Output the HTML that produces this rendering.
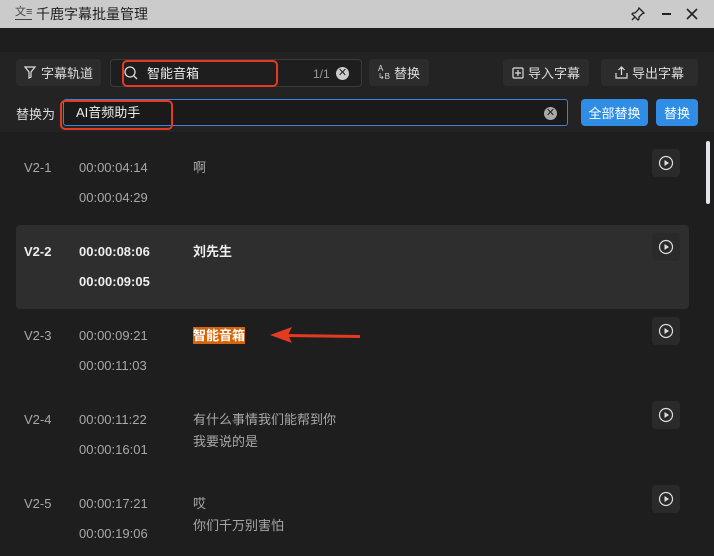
<!DOCTYPE html><html><head><meta charset="utf-8"><style>
*{margin:0;padding:0;box-sizing:border-box}
body{width:714px;height:556px;overflow:hidden;background:#1e1e1e;font-family:"Liberation Sans","Noto Sans CJK SC",sans-serif;font-size:13px;color:#ddd;position:relative}
.a{position:absolute}
.btn{position:absolute;background:#2c2c2c;border-radius:4px;color:#ddd;font-size:13px;display:flex;align-items:center;justify-content:center;gap:4px;height:27px}
.t{position:absolute;line-height:16px;font-size:13px;color:#a8a8a8}
.play{position:absolute;left:652px;width:28px;height:28px;background:#2a2a2a;border-radius:4px;display:flex;align-items:center;justify-content:center}
</style></head><body>
<div class="a" style="left:0;top:0;width:714px;height:28px;background:#cbcbcb"></div>
<div class="a" style="left:15px;top:5px;font-size:11px;color:#444;line-height:14px;border-bottom:1px solid #444">文≡</div>
<div class="a" style="left:36px;top:5px;font-size:14px;color:#222;line-height:18px">千鹿字幕批量管理</div>
<svg class="a" style="left:630px;top:6px" width="16" height="16" viewBox="0 0 16 16" fill="none" stroke="#222" stroke-width="1.3"><path d="M9 2l5 5-2 1-3 3 0 2-1 1-6-6 1-1h2l3-3z M5 11l-3 3"/></svg>
<div class="a" style="left:662px;top:13px;width:9px;height:2px;background:#222"></div>
<svg class="a" style="left:686px;top:8px" width="12" height="12" viewBox="0 0 12 12" stroke="#222" stroke-width="1.6"><path d="M1 1l10 10M11 1L1 11"/></svg>

<div class="a" style="left:0;top:52px;width:714px;height:80px;background:#232323"></div>
<div class="btn" style="left:16px;top:59px;width:85px">
<svg width="13" height="13" viewBox="0 0 13 13" fill="none" stroke="#ddd" stroke-width="1.2"><path d="M1 1h10L7 6v5L5 12V6z"/></svg>字幕轨道</div>
<div class="a" style="left:110px;top:59px;width:252px;height:28px;border:1px solid #3a3a3a;border-radius:4px;background:#1e1e1e"></div>
<div class="a" style="left:122px;top:60px;width:156px;height:27px;border:2px solid #e53a22;border-radius:5px"></div>
<svg class="a" style="left:124px;top:66px" width="14" height="14" viewBox="0 0 14 14" fill="none" stroke="#ddd" stroke-width="1.3"><circle cx="6" cy="6" r="5"/><path d="M10 10l3 3"/></svg>
<div class="a" style="left:147px;top:66px;font-size:13px;color:#eee;line-height:16px">智能音箱</div>
<div class="a" style="left:313px;top:67px;font-size:12px;color:#999">1/1</div>
<div class="a" style="left:336px;top:67px;width:13px;height:13px;border-radius:50%;background:#ccc;color:#222;font-size:11px;line-height:13px;text-align:center">✕</div>
<div class="btn" style="left:369px;top:59px;width:60px"><span style="font-size:8px;line-height:8px">A<br>↳B</span>替换</div>
<div class="btn" style="left:503px;top:59px;width:86px"><svg width="12" height="12" viewBox="0 0 12 12" fill="none" stroke="#ddd" stroke-width="1.2"><rect x="1" y="1" width="10" height="10" rx="1"/><path d="M6 3v6M3 6h6"/></svg>导入字幕</div>
<div class="btn" style="left:601px;top:59px;width:97px"><svg width="13" height="13" viewBox="0 0 13 13" fill="none" stroke="#ddd" stroke-width="1.2"><path d="M6.5 9V1M3.5 4l3-3 3 3M1 7v5h11V7"/></svg>导出字幕</div>

<div class="a" style="left:16px;top:104px;font-size:13px;color:#ddd">替换为</div>
<div class="a" style="left:63px;top:99px;width:505px;height:27px;border:1px solid #3d82d6;border-radius:3px;background:#1a1a1a"></div>
<div class="a" style="left:60px;top:100px;width:113px;height:30px;border:2px solid #e53a22;border-radius:5px"></div>
<div class="a" style="left:76px;top:105px;font-size:13px;color:#eee;line-height:16px">AI音频助手</div>
<div class="a" style="left:544px;top:107px;width:13px;height:13px;border-radius:50%;background:#aaa;color:#222;font-size:11px;line-height:13px;text-align:center">✕</div>
<div class="btn" style="left:581px;top:99px;width:67px;background:#2f8de6;color:#fff">全部替换</div>
<div class="btn" style="left:656px;top:99px;width:42px;background:#2f8de6;color:#fff">替换</div>

<div class="a" style="left:706px;top:141px;width:4px;height:63px;background:#e4e6ee;border-radius:2px"></div>
<div class="a" style="left:16px;top:225px;width:673px;height:84px;background:#2e2e2e;border-radius:4px"></div>

<div class="t" style="left:24px;top:160px">V2-1</div><div class="t" style="left:79px;top:160px">00:00:04:14</div><div class="t" style="left:79px;top:190px">00:00:04:29</div><div class="t" style="left:193px;top:160px">啊</div>
<div class="t" style="left:24px;top:244px;color:#eee;font-weight:bold">V2-2</div><div class="t" style="left:79px;top:244px;color:#eee;font-weight:bold">00:00:08:06</div><div class="t" style="left:79px;top:274px;color:#eee;font-weight:bold">00:00:09:05</div><div class="t" style="left:193px;top:244px;color:#eee;font-weight:bold">刘先生</div>
<div class="t" style="left:24px;top:328px">V2-3</div><div class="t" style="left:79px;top:328px">00:00:09:21</div><div class="t" style="left:79px;top:358px">00:00:11:03</div><div class="t" style="left:193px;top:327px;color:#fff;font-weight:bold;background:#d6650a;line-height:17px">智能音箱</div>
<div class="t" style="left:24px;top:412px">V2-4</div><div class="t" style="left:79px;top:412px">00:00:11:22</div><div class="t" style="left:79px;top:442px">00:00:16:01</div><div class="t" style="left:193px;top:412px">有什么事情我们能帮到你</div><div class="t" style="left:193px;top:434px">我要说的是</div>
<div class="t" style="left:24px;top:496px">V2-5</div><div class="t" style="left:79px;top:496px">00:00:17:21</div><div class="t" style="left:79px;top:526px">00:00:19:06</div><div class="t" style="left:193px;top:496px">哎</div><div class="t" style="left:193px;top:518px">你们千万别害怕</div>

<svg class="a" style="left:262px;top:324px" width="104" height="24" viewBox="0 0 104 24"><path d="M24 11.5L98 12.5" stroke="#e53a22" stroke-width="3"/><path d="M8 11L30 3 26 11 30 19z" fill="#e53a22"/></svg>

<div class="play" style="top:149px"><svg width="16" height="16" viewBox="0 0 16 16"><circle cx="8" cy="8" r="6.5" fill="none" stroke="#ddd" stroke-width="1.2"/><path d="M6.5 5v6l4.5-3z" fill="#ddd"/></svg></div>
<div class="play" style="top:233px"><svg width="16" height="16" viewBox="0 0 16 16"><circle cx="8" cy="8" r="6.5" fill="none" stroke="#ddd" stroke-width="1.2"/><path d="M6.5 5v6l4.5-3z" fill="#ddd"/></svg></div>
<div class="play" style="top:317px"><svg width="16" height="16" viewBox="0 0 16 16"><circle cx="8" cy="8" r="6.5" fill="none" stroke="#ddd" stroke-width="1.2"/><path d="M6.5 5v6l4.5-3z" fill="#ddd"/></svg></div>
<div class="play" style="top:401px"><svg width="16" height="16" viewBox="0 0 16 16"><circle cx="8" cy="8" r="6.5" fill="none" stroke="#ddd" stroke-width="1.2"/><path d="M6.5 5v6l4.5-3z" fill="#ddd"/></svg></div>
<div class="play" style="top:485px"><svg width="16" height="16" viewBox="0 0 16 16"><circle cx="8" cy="8" r="6.5" fill="none" stroke="#ddd" stroke-width="1.2"/><path d="M6.5 5v6l4.5-3z" fill="#ddd"/></svg></div>
</body></html>
